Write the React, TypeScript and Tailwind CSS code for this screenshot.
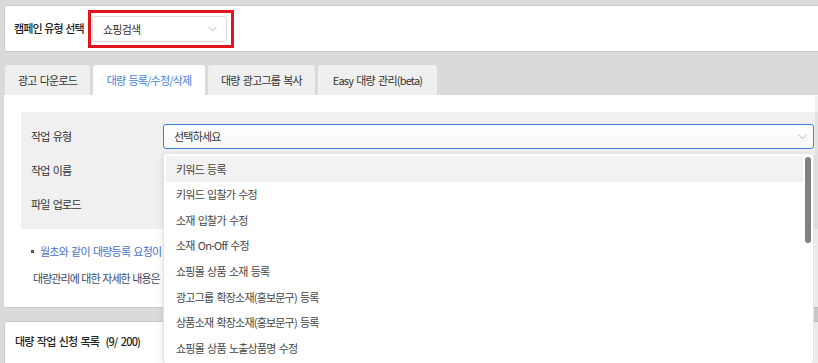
import React from 'react';

const options = [
  '키워드 등록',
  '키워드 입찰가 수정',
  '소재 입찰가 수정',
  '소재 On-Off 수정',
  '쇼핑몰 상품 소재 등록',
  '광고그룹 확장소재(홍보문구) 등록',
  '상품소재 확장소재(홍보문구) 등록',
  '쇼핑몰 상품 노출상품명 수정',
];

const tabs = [
  { label: '광고 다운로드', w: 'w-[85px]' },
  { label: '대량 등록/수정/삭제', w: 'w-[112px]', active: true },
  { label: '대량 광고그룹 복사', w: 'w-[107px]' },
  { label: 'Easy 대량 관리(beta)', w: 'w-[119px]' },
];

const Chevron = ({ className }: { className?: string }) => (
  <svg width="9" height="6" viewBox="0 0 9 6" className={className}>
    <path d="M0.5 0.8 L4.5 4.8 L8.5 0.8" fill="none" stroke="#b5b5b5" strokeWidth="1" />
  </svg>
);

const App = () => {
  return (
    <div className="relative h-[363px] w-[818px] overflow-hidden bg-[#dadada] font-['Noto_Sans_CJK_KR','Liberation_Sans',sans-serif] text-[11px] tracking-[-0.8px] [word-spacing:1.5px] text-[#333]">
      <div className="w-[830px] pl-[4px] pt-[5px]">
        {/* campaign type */}
        <div className="flex h-[47px] items-center rounded-[3px] border border-[#cacaca] bg-white pl-[9px]">
          <span className="w-[74px] shrink-0 whitespace-nowrap font-medium tracking-[-0.9px] [word-spacing:1px] text-[#222]">
            캠페인 유형 선택
          </span>
          <div className="flex h-[38px] w-[146px] items-center border-[3px] border-[#e3141c] pl-[1px] pt-[1px]">
            <div className="flex h-[26px] w-[135px] items-center justify-between rounded-[3px] border border-[#dcdcdc] bg-white pl-[10px] pr-[9px]">
              <span>쇼핑검색</span>
              <Chevron />
            </div>
          </div>
        </div>

        {/* tabs */}
        <div className="mt-[13px] flex h-[30px] gap-[3px] pl-[1px]">
          {tabs.map((t) => (
            <div
              key={t.label}
              className={`${t.w} flex items-center justify-center rounded-t-[3px] ${
                t.active ? 'bg-white text-[#3f7fe2]' : 'bg-[#efefef] text-[#333]'
              }`}
            >
              {t.label}
            </div>
          ))}
        </div>

        {/* panel */}
        <div className="h-[213px] rounded-b-[3px] border-b border-[#cacaca] bg-white pl-[17px] pt-[17px]">
          <div className="flex h-[117px] flex-col gap-[9px] bg-[#f0f0f0] pl-[10px] pt-[12px]">
            <div className="flex h-[25px] items-center">
              <span className="w-[132px]">작업 유형</span>
              <div className="flex h-[25px] w-[651px] items-center justify-between rounded-[3px] border border-[#3d7ee0] bg-gradient-to-b from-white to-[#f7f7f7] pl-[10px] pr-[6px]">
                <span>선택하세요</span>
                <Chevron />
              </div>
            </div>
            <div className="flex h-[25px] items-center">
              <span className="w-[132px]">작업 이름</span>
            </div>
            <div className="flex h-[25px] items-center">
              <span className="w-[132px]">파일 업로드</span>
            </div>
          </div>
          <div className="mt-[14px] flex w-[142px] items-center overflow-hidden whitespace-nowrap pl-[10px] text-[#4a72c2]">
            <span className="mr-[6px] inline-block h-[3px] w-[3px] shrink-0 bg-[#555]" />
            <span>월초와 같이 대량등록 요청이</span>
          </div>
          <div className="mt-[10px] w-[142px] overflow-hidden whitespace-nowrap pl-[12px] tracking-[-0.95px] [word-spacing:1px] text-[#3b4868]">
            대량관리에 대한 자세한 내용은
          </div>
        </div>

        {/* list card */}
        <div className="mt-[13px] h-[60px] rounded-[3px] border border-[#cacaca] bg-white pl-[10px] pt-[11px]">
          <span className="font-medium text-[#222]">대량 작업 신청 목록 &nbsp;(9/ 200)</span>
        </div>
      </div>

      {/* open dropdown */}
      <div className="absolute left-[163px] top-[153px] w-[651px] rounded-[3px] border border-[#e2e2e2] bg-white p-[2px] shadow-[0_2px_6px_rgba(0,0,0,0.12)]">
        <div className="flex">
          <div className="flex-1 pr-[2px]">
            {options.map((o, i) => (
              <div
                key={o}
                className={`flex h-[25.6px] items-center pl-[10px] text-[#444] ${i === 0 ? 'bg-[#f2f2f2]' : ''}`}
              >
                {o}
              </div>
            ))}
          </div>
          <div className="w-[6px] pt-[1px]">
            <div className="h-[86px] w-[6px] rounded-[3px] bg-[#808080]" />
          </div>
        </div>
      </div>

      <div className="absolute right-0 top-[96px] h-[267px] w-[3px] bg-black/[0.06]" />
    </div>
  );
};

export default App;
